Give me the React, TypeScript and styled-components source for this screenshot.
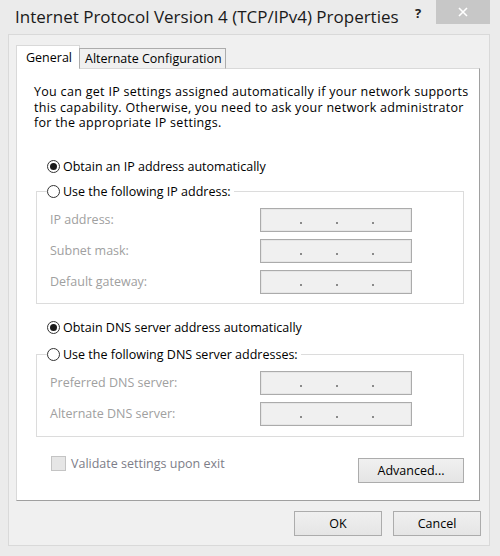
import { FunctionComponent } from "react";
import styled, { createGlobalStyle } from "styled-components";

const GlobalStyle = createGlobalStyle`
  html, body {
    margin: 0;
    padding: 0;
    background: #ebebeb;
  }
  body {
    font-family: "Open Sans", "Noto Sans", Arial, sans-serif;
    font-size: 12.5px;
    color: #000;
  }
`;

const Window = styled.div`
  width: 500px;
  height: 556px;
  background: #ebebeb;
  display: flex;
  flex-direction: column;
  overflow: hidden;
`;

const TitleBar = styled.div`
  height: 34px;
  display: flex;
  align-items: flex-start;
  padding-left: 15px;
  padding-right: 10px;
`;

const Title = styled.div`
  flex: 1;
  font-size: 17px;
  line-height: 22px;
  margin-top: 6px;
  color: #1a1a1a;
  white-space: nowrap;
`;

const Help = styled.div`
  width: 14px;
  font-size: 13px;
  font-weight: 700;
  line-height: 14px;
  margin-top: 6px;
  margin-right: 11px;
  color: #222;
  text-align: center;
`;

const CloseButton = styled.div`
  width: 54px;
  height: 24px;
  background: #c7c7c7;
  color: #fff;
  display: flex;
  align-items: center;
  justify-content: center;
`;

const Client = styled.div`
  width: 482px;
  height: 512px;
  box-sizing: border-box;
  margin-left: 8px;
  border: 1px solid #d9d9d9;
  background: #f0f0f0;
  padding: 10px 9px 0 7px;
  display: flex;
  flex-direction: column;
`;

const TabStrip = styled.div`
  display: flex;
  align-items: flex-end;
  height: 24px;
  margin-bottom: -1px;
  position: relative;
  z-index: 1;
`;

const Tab = styled.div<{ $active?: boolean }>`
  box-sizing: border-box;
  width: ${(p) => (p.$active ? "64px" : "147px")};
  height: ${(p) => (p.$active ? "24px" : "21px")};
  padding-left: ${(p) => (p.$active ? "9px" : "5px")};
  margin-left: ${(p) => (p.$active ? "0" : "-1px")};
  display: flex;
  align-items: center;
  background: ${(p) => (p.$active ? "#fff" : "#f0f0f0")};
  border: 1px solid ${(p) => (p.$active ? "#d9d9d9" : "#acacac")};
  border-bottom: ${(p) => (p.$active ? "none" : "1px solid #d9d9d9")};
  white-space: nowrap;
`;

const Panel = styled.div`
  width: 464px;
  height: 433px;
  box-sizing: border-box;
  background: #fff;
  border: 1px solid #d9d9d9;
  border-right-color: #a0a0a0;
  border-bottom-color: #a0a0a0;
  padding: 15px 14px 0 17px;
  display: flex;
  flex-direction: column;
`;

const Description = styled.p`
  margin: 0;
  line-height: 15.5px;
  letter-spacing: 0.3px;
  white-space: nowrap;
`;

const RadioRow = styled.label<{ $top?: number }>`
  display: flex;
  align-items: center;
  gap: 3px;
  height: 17px;
  margin-left: 13px;
  margin-top: ${(p) => p.$top ?? 0}px;
  white-space: nowrap;
`;

const RadioCircle = styled.span<{ $checked?: boolean }>`
  width: 13px;
  height: 13px;
  box-sizing: border-box;
  border-radius: 50%;
  border: 1px solid #333;
  background: #fff;
  display: flex;
  align-items: center;
  justify-content: center;
  flex-shrink: 0;
  &::after {
    content: "";
    width: 7px;
    height: 7px;
    border-radius: 50%;
    background: ${(p) => (p.$checked ? "#1a1a1a" : "transparent")};
  }
`;

const Group = styled.fieldset<{ $top?: number; $bottom?: number }>`
  margin: ${(p) => p.$top ?? 0}px 0 0 2px;
  width: 428px;
  box-sizing: border-box;
  border: 1px solid #dcdcdc;
  padding: 8px 0 ${(p) => p.$bottom ?? 8}px 0;
  min-inline-size: 0;
`;

const Legend = styled.legend`
  margin-left: 10px;
  padding: 0 3px 0 0;
  height: 17px;
  display: flex;
  align-items: center;
  gap: 3px;
  white-space: nowrap;
`;

const FieldGrid = styled.div`
  display: grid;
  grid-template-columns: 210px 152px;
  row-gap: 7px;
  align-items: center;
  padding-left: 13px;
`;

const FieldLabel = styled.span`
  color: #a0a0a0;
`;

const AddressBox = styled.div`
  height: 24px;
  box-sizing: border-box;
  border: 1px solid #ababab;
  box-shadow: inset 0 0 0 1px #e6e6e6;
  background: #f0f0f0;
  display: flex;
  align-items: flex-end;
  padding: 0 0 7px 39px;
  gap: 34px;
`;

const Dot = styled.span`
  width: 2px;
  height: 2px;
  background: #8a8a8a;
`;

const BottomRow = styled.div`
  display: flex;
  justify-content: space-between;
  align-items: flex-start;
  margin-top: 19px;
  width: 430px;
`;

const CheckRow = styled.label`
  display: flex;
  align-items: center;
  gap: 5px;
  margin-left: 17px;
  height: 16px;
  color: #7d7d88;
`;

const CheckBox = styled.span`
  width: 15px;
  height: 15px;
  box-sizing: border-box;
  border: 1px solid #c4c4c4;
  background: #e6e6e6;
`;

const Button = styled.button<{ $width: number }>`
  width: ${(p) => p.$width}px;
  height: 25px;
  box-sizing: border-box;
  border: 1px solid #acacac;
  background: linear-gradient(#f0f0f0, #e5e5e5);
  font-family: inherit;
  font-size: 12.5px;
  color: #000;
  padding: 0;
`;

const AdvancedButton = styled(Button)`
  margin-top: 2px;
`;

const ButtonRow = styled.div`
  display: flex;
  justify-content: flex-end;
  gap: 11px;
  margin-top: 10px;
  margin-right: -1px;
`;

const AddressField: FunctionComponent = () => (
  <AddressBox>
    <Dot />
    <Dot />
    <Dot />
  </AddressBox>
);

const App: FunctionComponent = () => {
  return (
    <>
      <GlobalStyle />
      <Window>
        <TitleBar>
          <Title>Internet Protocol Version 4 (TCP/IPv4) Properties</Title>
          <Help>?</Help>
          <CloseButton>
            <svg width="10" height="10" viewBox="0 0 10 10">
              <path d="M1 1 L9 9 M9 1 L1 9" stroke="#fff" strokeWidth="1.6" />
            </svg>
          </CloseButton>
        </TitleBar>
        <Client>
          <TabStrip>
            <Tab $active>General</Tab>
            <Tab>Alternate Configuration</Tab>
          </TabStrip>
          <Panel>
            <Description>
              You can get IP settings assigned automatically if your network supports
              <br />
              this capability. Otherwise, you need to ask your network administrator
              <br />
              for the appropriate IP settings.
            </Description>
            <RadioRow $top={27}>
              <RadioCircle $checked />
              Obtain an IP address automatically
            </RadioRow>
            <Group $top={8} $bottom={9}>
              <Legend>
                <RadioCircle />
                Use the following IP address:
              </Legend>
              <FieldGrid>
                <FieldLabel>IP address:</FieldLabel>
                <AddressField />
                <FieldLabel>Subnet mask:</FieldLabel>
                <AddressField />
                <FieldLabel>Default gateway:</FieldLabel>
                <AddressField />
              </FieldGrid>
            </Group>
            <RadioRow $top={15}>
              <RadioCircle $checked />
              Obtain DNS server address automatically
            </RadioRow>
            <Group $top={10} $bottom={10}>
              <Legend>
                <RadioCircle />
                Use the following DNS server addresses:
              </Legend>
              <FieldGrid>
                <FieldLabel>Preferred DNS server:</FieldLabel>
                <AddressField />
                <FieldLabel>Alternate DNS server:</FieldLabel>
                <AddressField />
              </FieldGrid>
            </Group>
            <BottomRow>
              <CheckRow>
                <CheckBox />
                Validate settings upon exit
              </CheckRow>
              <AdvancedButton $width={106}>Advanced...</AdvancedButton>
            </BottomRow>
          </Panel>
          <ButtonRow>
            <Button $width={88}>OK</Button>
            <Button $width={88}>Cancel</Button>
          </ButtonRow>
        </Client>
      </Window>
    </>
  );
};

export default App;
